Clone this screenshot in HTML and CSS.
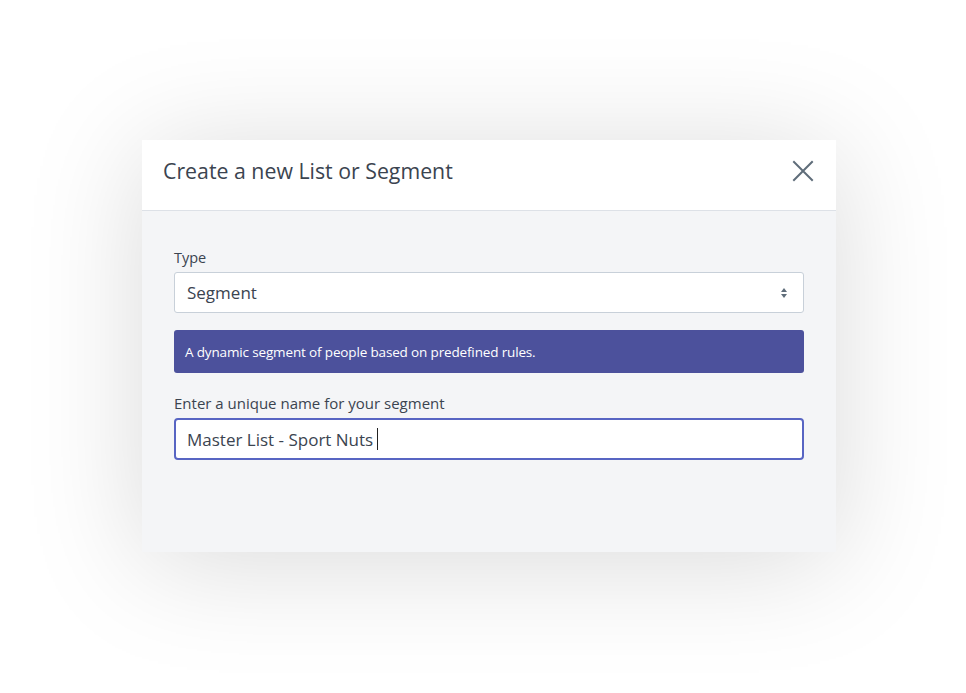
FILE: index.html
```html
<!DOCTYPE html>
<html>
<head>
<meta charset="utf-8">
<link rel="stylesheet" href="styles.css">
</head>
<body>
<div class="stage">
  <div class="modal">
    <div class="modal-header">
      <h2 class="modal-title">Create a new List or Segment</h2>
      <button class="close" aria-label="Close">
        <svg width="22" height="22" viewBox="0 0 22 22"><path d="M2 2 L20 20 M20 2 L2 20" stroke="#5f6d7a" stroke-width="2" fill="none" stroke-linecap="square"/></svg>
      </button>
    </div>
    <div class="modal-body">
      <label class="label">Type</label>
      <div class="select">
        <span>Segment</span>
        <svg class="arrows" width="8" height="12" viewBox="0 0 8 12"><path d="M4 1 L7 5 L1 5 Z M4 11 L7 7 L1 7 Z" fill="#5f6d7a"/></svg>
      </div>
      <div class="alert">A dynamic segment of people based on predefined rules.</div>
      <label class="label">Enter a unique name for your segment</label>
      <div class="input"><span>Master List - Sport Nuts</span><span class="caret"></span></div>
    </div>
  </div>
</div>
</body>
</html>
```
FILE: styles.css
```css
html, body { margin: 0; padding: 0; background: #ffffff; }
body { font-family: "Open Sans", "Noto Sans", sans-serif; color: #3a4350; }
.stage { padding: 140px 130px 141px 142px; }
.modal {
  width: 694px;
  height: 412px;
  background: #f4f5f7;
  box-shadow: 0 10px 110px rgba(0,0,0,0.15);
  display: flex;
  flex-direction: column;
}
.modal-header {
  height: 71px;
  box-sizing: border-box;
  background: #ffffff;
  border-bottom: 1px solid #dde1e7;
  display: flex;
  align-items: center;
  justify-content: space-between;
  padding: 0 22px 9px 21px;
  flex: none;
}
.modal-title {
  margin: 0;
  font-weight: 400;
  font-size: 21.3px;
  color: #3b4450;
}
.close { border: 0; background: none; padding: 0; width: 22px; height: 22px; display: block; margin-top: 1px; }
.close svg { display: block; }
.modal-body {
  padding: 37px 32px 0 32px;
  display: flex;
  flex-direction: column;
}
.label {
  font-size: 14.5px;
  line-height: 20px;
  color: #3b4450;
  margin-bottom: 4px;
}
.select {
  height: 41px;
  box-sizing: border-box;
  background: #fff;
  border: 1px solid #c8d0d9;
  border-radius: 3px;
  display: flex;
  align-items: center;
  justify-content: space-between;
  padding: 0 15px 0 12px;
  font-size: 17px;
  color: #3b4450;
}
.arrows { display: block; }
.alert {
  margin-top: 17px;
  height: 43px;
  box-sizing: border-box;
  background: #4c519c;
  border-radius: 3px;
  color: #ffffff;
  font-size: 13.5px;
  padding: 0 11px;
  display: flex;
  align-items: center;
  letter-spacing: -0.15px;
}
.alert + .label { margin-top: 20px; font-size: 15px; margin-bottom: 5px; }
.input {
  height: 42px;
  box-sizing: border-box;
  background: #fff;
  border: 2px solid #5865c3;
  border-radius: 4px;
  display: flex;
  align-items: center;
  padding: 0 11px;
  font-size: 17px;
  color: #3b4450;
}
.caret { display: inline-block; width: 1px; height: 22px; background: #222; margin-left: 4px; }
```
